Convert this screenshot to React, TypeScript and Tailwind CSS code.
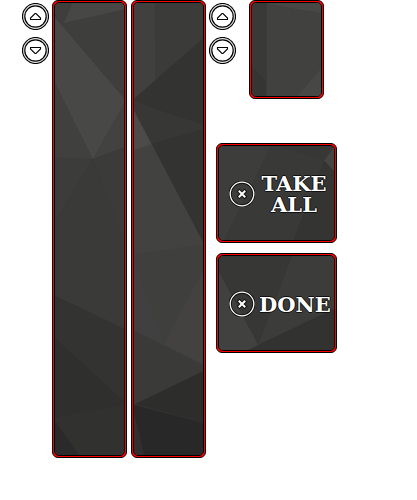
import type { ReactNode } from "react";

type Facet = { points: string; fill: string };

const leftFacets: Facet[] = [
  { points: "0,0 75,0 75,100 0,14", fill: "#3e3e3c" },
  { points: "21,0 75,0 75,8 11,22", fill: "#474746" },
  { points: "0,14 75,100 41,159 0,80", fill: "#484847" },
  { points: "0,78 41,159 0,157", fill: "#40403f" },
  { points: "75,99 75,146 41,159", fill: "#424241" },
  { points: "0,157 41,159 3,219 0,221", fill: "#3c3c3b" },
  { points: "41,159 75,238 75,330 0,295 0,221 3,219", fill: "#3a3a38" },
  { points: "41,159 75,146 75,246", fill: "#3b3b3a" },
  { points: "0,295 75,330 75,405 0,338", fill: "#333332" },
  { points: "0,337 75,404 75,406 0,419", fill: "#2f2f2e" },
  { points: "0,419 75,406 75,458 28,458", fill: "#31312f" },
  { points: "0,419 28,458 0,458", fill: "#2a2a2a" },
];

const middleFacets: Facet[] = [
  { points: "0,0 24,0 24,80 0,103", fill: "#40403e" },
  { points: "24,0 75,0 75,36 24,80", fill: "#3b3b39" },
  { points: "0,100 75,36 75,126", fill: "#333331" },
  { points: "0,102 75,124 75,130 20,144", fill: "#373735" },
  { points: "20,144 75,128 75,246", fill: "#333331" },
  { points: "0,106 75,246 75,368 0,333", fill: "#424241" },
  { points: "0,107 20,144 0,150", fill: "#4b4b4a" },
  { points: "0,255 33,345 0,333", fill: "#404040" },
  { points: "0,255 33,345 75,267 75,244", fill: "#3f3f3e" },
  { points: "75,267 75,366 33,345", fill: "#434241" },
  { points: "0,330 75,366 75,371 3,405 0,405", fill: "#3a3a39" },
  { points: "3,405 75,371 75,424", fill: "#2d2d2b" },
  { points: "0,405 75,424 75,458 0,458", fill: "#282828" },
  { points: "0,405 13,458 0,458", fill: "#30302f" },
];

const slotFacets: Facet[] = [
  { points: "0,0 17,0 17,99 0,99", fill: "#393937" },
  { points: "0,66 17,82 17,99 0,99", fill: "#353534" },
  { points: "17,0 75,0 75,13 17,3", fill: "#474745" },
  { points: "17,3 75,13 75,99 17,99", fill: "#414140" },
  { points: "75,67 75,99 47,99", fill: "#474746" },
];

const takeFacets: Facet[] = [
  { points: "0,0 56,0 6,100 0,100", fill: "#3d3d3c" },
  { points: "56,0 121,0 121,24 60,4", fill: "#373736" },
  { points: "56,0 109,17 77,100 6,100", fill: "#393938" },
  { points: "109,17 121,0 121,30", fill: "#444442" },
  { points: "109,17 121,30 121,100 77,100", fill: "#343433" },
];

const doneFacets: Facet[] = [
  { points: "0,0 77,0 42,93 0,15", fill: "#373736" },
  { points: "0,15 42,93 28,100 0,100", fill: "#414140" },
  { points: "77,0 121,0 121,55 42,93", fill: "#3c3c3b" },
  { points: "42,93 121,55 121,100 28,100", fill: "#323231" },
];

function Facets({ facets, width, height }: { facets: Facet[]; width: number; height: number }) {
  return (
    <svg
      aria-hidden="true"
      className="absolute inset-0 h-full w-full"
      viewBox={`2 2 ${width - 4} ${height - 4}`}
      preserveAspectRatio="none"
    >
      {facets.map((facet) => (
        <polygon key={facet.points} points={facet.points} fill={facet.fill} />
      ))}
    </svg>
  );
}

const frame = "rounded-md border border-black bg-[#ff0000] p-px";
const face = "relative h-full overflow-hidden rounded-[5px] border border-black bg-[#393938]";

function Panel({ label, className, children }: { label: string; className: string; children: ReactNode }) {
  return (
    <section aria-label={label} className={`shrink-0 ${frame} ${className}`}>
      <div className={face}>{children}</div>
    </section>
  );
}

function ScrollButton({ direction }: { direction: "up" | "down" }) {
  return (
    <button type="button" aria-label={`Scroll ${direction}`} className="block h-[27px] w-[27px] rounded-full">
      <svg viewBox="0 0 27 27" className="h-full w-full" fill="none" stroke="#000">
        <circle cx="13.5" cy="13.5" r="13" fill="#e8e8e6" strokeWidth="1.2" />
        <circle cx="13.5" cy="13.5" r="10.7" fill="#fff" strokeWidth="1.2" />
        <path
          d={direction === "up" ? "M13 10.5h1l4.5 4.5v1.5h-10V15z" : "M8.5 10.5h10V12L14 16.5h-1L8.5 12z"}
          strokeWidth="1.1"
        />
      </svg>
    </button>
  );
}

function ScrollButtons() {
  return (
    <div className="flex w-[27px] shrink-0 flex-col gap-[7px] pt-[3px]">
      <ScrollButton direction="up" />
      <ScrollButton direction="down" />
    </div>
  );
}

function ActionButton({ facets, lines }: { facets: Facet[]; lines: string[] }) {
  return (
    <button type="button" className={`block h-[100px] w-[121px] ${frame}`}>
      <span className={`block ${face}`}>
        <Facets facets={facets} width={121} height={100} />
        <span className="relative flex h-full items-center gap-1 pt-0.5 pl-[10px]">
          <svg viewBox="0 0 26 26" className="h-[26px] w-[26px] shrink-0" fill="none" aria-hidden="true">
            <circle cx="13" cy="13" r="11.8" stroke="#111" strokeWidth="3" />
            <circle cx="13" cy="13" r="11.8" stroke="#fff" strokeWidth="1.3" />
            <path d="M10.5 10.5l5 5m0-5l-5 5" stroke="#111" strokeWidth="4" strokeLinecap="square" />
            <path d="M10.5 10.5l5 5m0-5l-5 5" stroke="#fff" strokeWidth="2" strokeLinecap="square" />
          </svg>
          <span className="flex w-[70px] shrink-0 flex-col text-center font-['DejaVu_Serif',serif] text-[21px] leading-[21px] font-bold text-white [text-shadow:1px_0_#111,-1px_0_#111,0_1px_#111,0_-1px_#111]">
            {lines.map((line) => (
              <span key={line}>{line}</span>
            ))}
          </span>
        </span>
      </span>
    </button>
  );
}

export default function App() {
  return (
    <main className="flex min-h-screen items-start gap-[3px] bg-white pl-[22px]">
      <ScrollButtons />
      <div className="flex shrink-0 gap-1">
        <Panel label="Container items" className="h-[458px] w-[75px]">
          <Facets facets={leftFacets} width={75} height={458} />
        </Panel>
        <Panel label="Inventory items" className="h-[458px] w-[75px]">
          <Facets facets={middleFacets} width={75} height={458} />
        </Panel>
      </div>
      <div className="flex flex-col gap-11">
        <div className="flex gap-[13px]">
          <ScrollButtons />
          <Panel label="Selected item" className="h-[99px] w-[75px]">
            <Facets facets={slotFacets} width={75} height={99} />
          </Panel>
        </div>
        <div className="flex flex-col gap-[10px] pl-[7px]">
          <ActionButton facets={takeFacets} lines={["TAKE", "ALL"]} />
          <ActionButton facets={doneFacets} lines={["DONE"]} />
        </div>
      </div>
    </main>
  );
}
